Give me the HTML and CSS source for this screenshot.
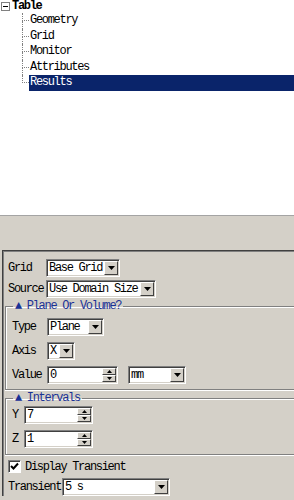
FILE: index.html
```html
<!DOCTYPE html>
<html lang="en">
<head>
  <meta charset="UTF-8">
  <title>Table Settings</title>
  <link rel="stylesheet" href="styles.css">
</head>
<body>
  <div class="tree">
    <div class="root">
      <svg class="expander" width="9" height="9" viewBox="0 0 9 9">
        <rect x="0.5" y="0.5" width="8" height="8" fill="#fff" stroke="#808080"/>
        <path d="M2 4.5h5" stroke="#000"/>
      </svg>
      <span class="node-label">Table</span>
    </div>
    <ul class="children">
      <li class="node"><span class="conn"><i class="conn-top"></i><i class="conn-bot"></i></span><span class="node-label">Geometry</span></li>
      <li class="node"><span class="conn"><i class="conn-top"></i><i class="conn-bot"></i></span><span class="node-label">Grid</span></li>
      <li class="node"><span class="conn"><i class="conn-top"></i><i class="conn-bot"></i></span><span class="node-label">Monitor</span></li>
      <li class="node"><span class="conn"><i class="conn-top"></i><i class="conn-bot"></i></span><span class="node-label">Attributes</span></li>
      <li class="node selected"><span class="conn"><i class="conn-top"></i><i class="conn-bot"></i></span><span class="node-label">Results</span></li>
    </ul>
  </div>

  <div class="toolbar"></div>

  <div class="panel">
    <div class="field">
      <span class="lbl">Grid</span>
      <div class="select w-grid"><span class="value">Base Grid</span><span class="drop-btn"><svg width="7" height="4" viewBox="0 0 7 4"><path d="M0 0h7L3.5 4z"/></svg></span></div>
    </div>
    <div class="field gap3">
      <span class="lbl">Source</span>
      <div class="select w-source"><span class="value">Use Domain Size</span><span class="drop-btn"><svg width="7" height="4" viewBox="0 0 7 4"><path d="M0 0h7L3.5 4z"/></svg></span></div>
    </div>

    <fieldset class="group first">
      <legend>&#9650; Plane Or Volume?</legend>
      <div class="field">
        <span class="lbl lbl-g">Type</span>
        <div class="select w-type"><span class="value">Plane</span><span class="drop-btn"><svg width="7" height="4" viewBox="0 0 7 4"><path d="M0 0h7L3.5 4z"/></svg></span></div>
      </div>
      <div class="field gap6">
        <span class="lbl lbl-g">Axis</span>
        <div class="select w-axis"><span class="value">X</span><span class="drop-btn"><svg width="7" height="4" viewBox="0 0 7 4"><path d="M0 0h7L3.5 4z"/></svg></span></div>
      </div>
      <div class="field gap6">
        <span class="lbl lbl-g">Value</span>
        <div class="select w-value"><span class="value">0</span><span class="spin"><span class="spin-btn"><svg width="5" height="3" viewBox="0 0 5 3"><path d="M0 3h5L2.5 0z"/></svg></span><span class="spin-btn"><svg width="5" height="3" viewBox="0 0 5 3"><path d="M0 0h5L2.5 3z"/></svg></span></span></div>
        <div class="select w-unit"><span class="value">mm</span><span class="drop-btn"><svg width="7" height="4" viewBox="0 0 7 4"><path d="M0 0h7L3.5 4z"/></svg></span></div>
      </div>
    </fieldset>

    <fieldset class="group second">
      <legend>&#9650; Intervals</legend>
      <div class="field">
        <span class="lbl lbl-axis">Y</span>
        <div class="select w-count"><span class="value">7</span><span class="spin"><span class="spin-btn"><svg width="5" height="3" viewBox="0 0 5 3"><path d="M0 3h5L2.5 0z"/></svg></span><span class="spin-btn"><svg width="5" height="3" viewBox="0 0 5 3"><path d="M0 0h5L2.5 3z"/></svg></span></span></div>
      </div>
      <div class="field gap6">
        <span class="lbl lbl-axis">Z</span>
        <div class="select w-count"><span class="value">1</span><span class="spin"><span class="spin-btn"><svg width="5" height="3" viewBox="0 0 5 3"><path d="M0 3h5L2.5 0z"/></svg></span><span class="spin-btn"><svg width="5" height="3" viewBox="0 0 5 3"><path d="M0 0h5L2.5 3z"/></svg></span></span></div>
      </div>
    </fieldset>

    <label class="check-row">
      <span class="checkbox"><svg width="9" height="9" viewBox="0 0 9 9"><path d="M1 4l2.5 2.5L8 1.5" fill="none" stroke="#000" stroke-width="2"/></svg></span>
      <span>Display Transient</span>
    </label>

    <div class="field gap5">
      <span class="lbl lbl-trans">Transient</span>
      <div class="select w-trans"><span class="value">5 s</span><span class="drop-btn"><svg width="7" height="4" viewBox="0 0 7 4"><path d="M0 0h7L3.5 4z"/></svg></span></div>
    </div>
  </div>
</body>
</html>
```

FILE: styles.css
```css
* {
  box-sizing: border-box;
}

body {
  margin: 0;
  width: 294px;
  height: 500px;
  overflow: hidden;
  background: #d4d0c8;
  font-family: "Liberation Mono", monospace;
  font-size: 12px;
  letter-spacing: -1.3px;
  color: #000;
}

/* tree view */
.tree {
  background: #fff;
  height: 215px;
}

.root {
  display: flex;
  align-items: center;
  height: 13px;
}

.expander {
  margin: 0 1px;
}

.root .node-label {
  font-weight: bold;
  line-height: 13px;
}

.children {
  list-style: none;
  margin: 0;
  padding: 0 0 0 22px;
}

.node {
  display: flex;
  height: 15.5px;
}

.conn {
  display: flex;
  flex-direction: column;
  width: 7px;
}

.conn i {
  display: block;
  flex: 1;
  border-left: 1px dotted #808080;
}

.conn .conn-top {
  border-bottom: 1px dotted #808080;
}

.node:last-child .conn-bot {
  border-left: none;
}

.node-label {
  padding-left: 1px;
  line-height: 15.5px;
}

.node.selected .node-label {
  flex: 1;
  background: #0a246a;
  color: #fff;
}

/* gray strip */
.toolbar {
  height: 35px;
  border-top: 1px solid #a4a4a4;
}

/* settings panel */
.panel {
  margin-left: 2px;
  border-top: 1px solid #404040;
  border-left: 1px solid #404040;
  box-shadow: inset 1px 1px 0 #808080;
  padding: 8px 0 0 5px;
  display: flex;
  flex-direction: column;
}

.field {
  display: flex;
  align-items: center;
  height: 18px;
}

.gap3 { margin-top: 3px; }
.gap5 { margin-top: 5px; }
.gap6 { margin-top: 6px; }

.lbl {
  width: 38px;
  flex-shrink: 0;
}

.lbl-g { width: 35px; }
.lbl-axis { width: 12px; }
.lbl-trans { width: 54px; }

.select {
  display: flex;
  height: 18px;
  background: #fff;
  border: 1px solid;
  border-color: #808080 #fff #fff #808080;
  box-shadow: inset 1px 1px 0 #404040, inset -1px -1px 0 #d4d0c8;
}

.select .value {
  flex: 1;
  padding-left: 2px;
  line-height: 16px;
  overflow: hidden;
  white-space: nowrap;
}

.drop-btn {
  width: 14px;
  margin: 1px 1px 1px 0;
  background: #d4d0c8;
  border: 1px solid;
  border-color: #fff #404040 #404040 #fff;
  display: flex;
  align-items: center;
  justify-content: center;
}

.spin {
  width: 14px;
  margin: 1px 1px 1px 0;
  display: flex;
  flex-direction: column;
}

.spin-btn {
  flex: 1;
  background: #d4d0c8;
  border: 1px solid;
  border-color: #fff #404040 #404040 #fff;
  display: flex;
  align-items: center;
  justify-content: center;
}

.w-grid { width: 74px; }
.w-source { width: 110px; }
.w-type { width: 57px; }
.w-axis { width: 28px; }
.w-value { width: 71px; }
.w-unit { width: 58px; margin-left: 10px; }
.w-count { width: 69px; }
.w-trans { width: 108px; }

/* group boxes */
.group {
  margin: 1px 0 0 -3px;
  padding: 5px 0 5px 6px;
  border: 1px solid #808080;
  border-right: none;
  box-shadow: inset 1px 1px 0 #fff, 0 1px 0 #fff;
  min-width: 0;
}

.group.second {
  padding: 1px 0 6px 6px;
}

.group legend {
  padding: 0 2px;
  margin-left: 1px;
  line-height: 14px;
  color: #1a3296;
}

.check-row {
  display: flex;
  align-items: center;
  margin-top: 5px;
  height: 13px;
}

.checkbox {
  width: 13px;
  height: 13px;
  margin-right: 4px;
  background: #fff;
  border: 1px solid;
  border-color: #808080 #fff #fff #808080;
  box-shadow: inset 1px 1px 0 #404040;
  display: flex;
  align-items: center;
  justify-content: center;
}
```
